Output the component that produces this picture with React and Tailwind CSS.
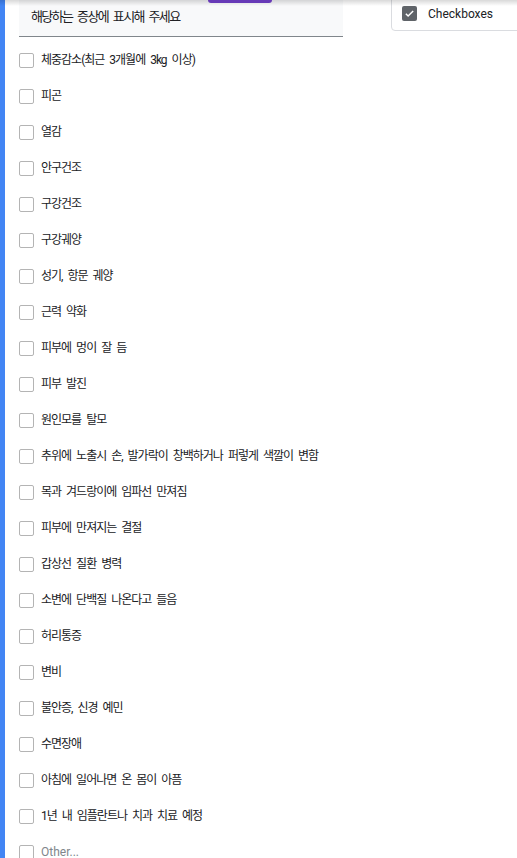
const options = [
  "체중감소(최근 3개월에 3kg 이상)",
  "피곤",
  "열감",
  "안구건조",
  "구강건조",
  "구강궤양",
  "성기, 항문 궤양",
  "근력 약화",
  "피부에 멍이 잘 듬",
  "피부 발진",
  "원인모를 탈모",
  "추위에 노출시 손, 발가락이 창백하거나 퍼렇게 색깔이 변함",
  "목과 겨드랑이에 임파선 만져짐",
  "피부에 만져지는 결절",
  "갑상선 질환 병력",
  "소변에 단백질 나온다고 들음",
  "허리통증",
  "변비",
  "불안증, 신경 예민",
  "수면장애",
  "아침에 일어나면 온 몸이 아픔",
  "1년 내 임플란트나 치과 치료 예정",
];

const font = { fontFamily: "Roboto, 'Noto Sans CJK KR', Arial, sans-serif" };

function Box() {
  return <span className="h-[15px] w-[15px] shrink-0 rounded-[2px] border-[1.5px] border-[#b4b4b4] bg-white" />;
}

export default function App() {
  return (
    <div className="relative h-[858px] w-[517px] overflow-hidden bg-white" style={font}>
      <div className="pointer-events-none absolute inset-x-0 top-0 z-10 h-[6px] bg-gradient-to-b from-black/15 to-transparent" />
      <div className="absolute left-[208px] top-0 z-20 h-[3px] w-[64px] rounded-b-sm bg-[#673ab7]" />

      <div className="flex h-full">
        <div className="w-[5px] shrink-0 bg-[#4285f4]" />
        <div className="relative flex-1">
          <div className="absolute left-[386px] top-[-4px] flex h-[35px] w-[140px] items-center rounded-bl-[4px] border border-[#dadce0] bg-white pl-[10px]">
            <span className="flex h-[15px] w-[15px] items-center justify-center rounded-[2px] bg-[#5f6368]">
              <svg width="11" height="11" viewBox="0 0 24 24" fill="none" stroke="white" strokeWidth="3.2">
                <path d="M4 12.5l5 5L20 6.5" />
              </svg>
            </span>
            <span className="ml-[11px] text-[12px] text-[#202124]">Checkboxes</span>
          </div>

          <div className="ml-[14px] h-[37px] w-[324px] border-b border-[#80868b] bg-[#f8f9fa] pl-[12px] pt-[7px] text-[13px] tracking-[-1.6px] [word-spacing:3px] text-[#202124]">
            해당하는 증상에 표시해 주세요
          </div>

          <div className="ml-[14px] mt-[5px] flex flex-col">
            {options.map((o) => (
              <div key={o} className="flex h-[36px] items-center">
                <Box />
                <span className="ml-[7px] text-[12px] tracking-[-1px] [word-spacing:3px] text-[#202124]">{o}</span>
              </div>
            ))}
            <div className="flex h-[36px] items-center">
              <Box />
              <span className="ml-[7px] text-[12px] text-[#80868b]">Other...</span>
            </div>
          </div>
        </div>
      </div>
    </div>
  );
}
